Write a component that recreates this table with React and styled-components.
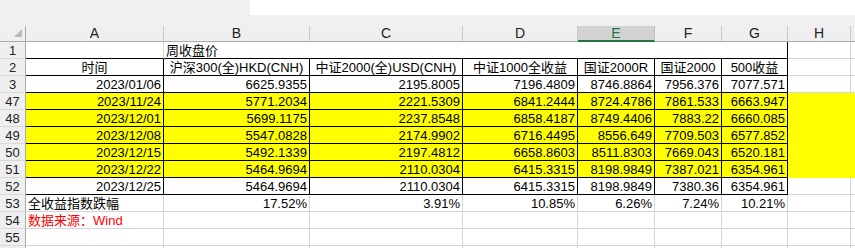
import React from "react";
import styled, { createGlobalStyle } from "styled-components";

const GRID = "#d4d4d4";
const HEAD_LINE = "#ababab";
const YELLOW = "#ffff00";
const BLACK = "#000";

const GlobalStyle = createGlobalStyle`
  body {
    margin: 0;
    background: #fff;
    font-family: "Liberation Sans", "Noto Sans CJK SC", Arial, sans-serif;
  }
`;

const Window = styled.div`
  width: 855px;
  height: 248px;
  overflow: hidden;
  background: #fff;
`;

const TopBar = styled.div`
  height: 26px;
  background: #f0f0f0;
  display: flex;
  align-items: flex-start;
`;

const FormulaBox = styled.div`
  margin-left: 250px;
  flex: 1;
  height: 15px;
  background: #fff;
`;

const Sheet = styled.div`
  display: grid;
  grid-template-columns: ${(p) => p.$cols};
  grid-template-rows: 16px;
  grid-auto-rows: 17px;
  width: max-content;
`;

const Corner = styled.div`
  box-sizing: border-box;
  background: #efefef;
  border-right: 1px solid ${HEAD_LINE};
  border-bottom: 1px solid ${HEAD_LINE};
  display: flex;
  align-items: flex-end;
  justify-content: flex-end;
  padding: 0 3px 4px 0;
`;

const Triangle = styled.div`
  width: 0;
  height: 0;
  border-left: 8px solid transparent;
  border-bottom: 8px solid #b9b9b9;
`;

const ColHead = styled.div`
  box-sizing: border-box;
  background: ${(p) => (p.$active ? "#d2d2d2" : "#efefef")};
  color: ${(p) => (p.$active ? "#217346" : "#222")};
  border-right: 1px solid ${(p) => (p.$active ? "#c0c0c0" : "#c8c8c8")};
  border-bottom: ${(p) => (p.$active ? "2px solid #217346" : `1px solid ${HEAD_LINE}`)};
  text-align: center;
  font-size: 14px;
  line-height: 15px;
  overflow: hidden;
`;

const RowHead = styled.div`
  box-sizing: border-box;
  background: #efefef;
  color: #222;
  border-right: 1px solid ${HEAD_LINE};
  border-bottom: 1px solid #d9d9d9;
  text-align: center;
  font-size: 13px;
  line-height: 15px;
  padding-top: 1px;
`;

const Cell = styled.div`
  grid-column: span ${(p) => p.$span || 1};
  box-sizing: border-box;
  background: ${(p) => p.$fill || "#fff"};
  color: ${(p) => p.$color || "#000"};
  border-right: 1px solid ${(p) => p.$right};
  border-bottom: 1px solid ${(p) => p.$bottom};
  text-align: ${(p) => p.$align || "right"};
  padding: 1px 2px 0 2px;
  font-size: 13px;
  line-height: 15px;
  white-space: nowrap;
  overflow: hidden;
`;

// the I column only peeks in at the right edge, so its letter stays off-screen
const columns = [
  { key: "A", w: 138 },
  { key: "B", w: 146 },
  { key: "C", w: 153 },
  { key: "D", w: 115 },
  { key: "E", w: 77, active: true },
  { key: "F", w: 67 },
  { key: "G", w: 66 },
  { key: "H", w: 63 },
  { key: "I", w: 64, hidden: true },
];

const rows = [
  { n: 1, title: "周收盘价" },
  {
    n: 2,
    boxed: true,
    align: "center",
    cells: ["时间", "沪深300(全)HKD(CNH)", "中证2000(全)USD(CNH)", "中证1000全收益", "国证2000R", "国证2000", "500收益"],
  },
  { n: 3, boxed: true, cells: ["2023/01/06", "6625.9355", "2195.8005", "7196.4809", "8746.8864", "7956.376", "7077.571"] },
  { n: 47, boxed: true, fill: YELLOW, cells: ["2023/11/24", "5771.2034", "2221.5309", "6841.2444", "8724.4786", "7861.533", "6663.947"] },
  { n: 48, boxed: true, fill: YELLOW, cells: ["2023/12/01", "5699.1175", "2237.8548", "6858.4187", "8749.4406", "7883.22", "6660.085"] },
  { n: 49, boxed: true, fill: YELLOW, cells: ["2023/12/08", "5547.0828", "2174.9902", "6716.4495", "8556.649", "7709.503", "6577.852"] },
  { n: 50, boxed: true, fill: YELLOW, cells: ["2023/12/15", "5492.1339", "2197.4812", "6658.8603", "8511.8303", "7669.043", "6520.181"] },
  { n: 51, boxed: true, fill: YELLOW, cells: ["2023/12/22", "5464.9694", "2110.0304", "6415.3315", "8198.9849", "7387.021", "6354.961"] },
  { n: 52, boxed: true, cells: ["2023/12/25", "5464.9694", "2110.0304", "6415.3315", "8198.9849", "7380.36", "6354.961"] },
  { n: 53, firstLeft: true, cells: ["全收益指数跌幅", "17.52%", "3.91%", "10.85%", "6.26%", "7.24%", "10.21%"] },
  { n: 54, firstLeft: true, color: "#ff0000", cells: ["数据来源：Wind"] },
  { n: 55, cells: [] },
  { n: 56, cells: [], hideNumber: true },
];

const boxed = (ri, ci) => !!rows[ri] && !!rows[ri].boxed && ci <= 6;
const yellow = (ri, ci) => !!rows[ri] && rows[ri].fill === YELLOW && ci < columns.length;

const lineRight = (ri, ci) => {
  if (boxed(ri, ci) || boxed(ri, ci + 1)) return BLACK;
  if (yellow(ri, ci) && yellow(ri, ci + 1)) return YELLOW;
  return GRID;
};

const lineBottom = (ri, ci) => {
  if (boxed(ri, ci) || boxed(ri + 1, ci)) return BLACK;
  if (yellow(ri, ci)) return YELLOW;
  return GRID;
};

const TitleRow = ({ row }) => (
  <>
    <RowHead>{row.n}</RowHead>
    <Cell $right={GRID} $bottom={BLACK} />
    <Cell $span={6} $align="left" $right={BLACK} $bottom={BLACK}>
      {row.title}
    </Cell>
    <Cell $right={GRID} $bottom={GRID} />
    <Cell $right={GRID} $bottom={GRID} />
  </>
);

const DataRow = ({ row, ri }) => (
  <>
    <RowHead>{row.hideNumber ? "" : row.n}</RowHead>
    {columns.map((col, ci) => (
      <Cell
        key={col.key}
        $fill={row.fill}
        $color={row.color}
        $align={row.align || (row.firstLeft && ci === 0 ? "left" : "right")}
        $right={lineRight(ri, ci)}
        $bottom={lineBottom(ri, ci)}
      >
        {row.cells[ci] || ""}
      </Cell>
    ))}
  </>
);

export default function App() {
  const template = `26px ${columns.map((c) => `${c.w}px`).join(" ")}`;
  return (
    <Window>
      <GlobalStyle />
      <TopBar>
        <FormulaBox />
      </TopBar>
      <Sheet $cols={template}>
        <Corner>
          <Triangle />
        </Corner>
        {columns.map((col) => (
          <ColHead key={col.key} $active={col.active}>
            {col.hidden ? "" : col.key}
          </ColHead>
        ))}
        {rows.map((row, ri) =>
          row.title ? <TitleRow key={row.n} row={row} /> : <DataRow key={row.n} row={row} ri={ri} />
        )}
      </Sheet>
    </Window>
  );
}
